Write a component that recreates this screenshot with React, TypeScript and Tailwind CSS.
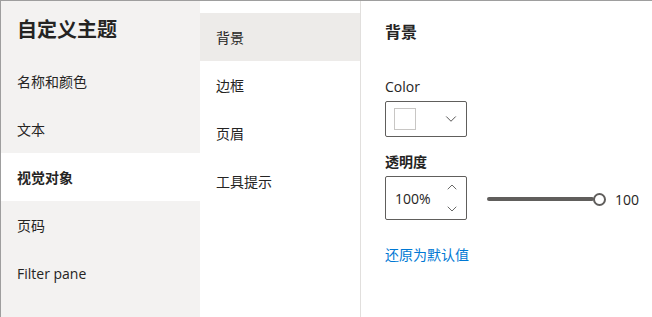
import { ChevronDown, ChevronUp } from "lucide-react";

const font = { fontFamily: '"Open Sans", "Noto Sans CJK SC", sans-serif' };

const sections = ["名称和颜色", "文本", "视觉对象", "页码", "Filter pane"];
const subSections = ["背景", "边框", "页眉", "工具提示"];

export default function App() {
  return (
    <div
      className="flex w-[652px] h-[317px] overflow-hidden border-t border-l border-[#9e9e9e] bg-white text-[#252423]"
      style={{ fontFamily: '"Noto Sans CJK SC", sans-serif' }}
    >
      {/* Left nav */}
      <div className="w-[199px] shrink-0 bg-[#f3f2f1] flex flex-col">
        <div className="h-[56px] flex items-center pl-4 text-[20px] font-bold">自定义主题</div>
        {sections.map((s, i) => (
          <div
            key={s}
            className={`h-[48px] flex items-center pl-4 text-[14px] ${i === 2 ? "bg-white font-bold" : ""}`}
            style={s === "Filter pane" ? font : undefined}
          >
            {s}
          </div>
        ))}
      </div>

      {/* Sub nav */}
      <div className="w-[161px] shrink-0 border-r border-[#e1dfdd] flex flex-col pt-3">
        {subSections.map((s, i) => (
          <div
            key={s}
            className={`h-[48px] flex items-center pl-4 text-[14px] ${i === 0 ? "bg-[#edebe9]" : ""}`}
          >
            {s}
          </div>
        ))}
      </div>

      {/* Content */}
      <div className="flex-1 pl-6 pt-[18px] flex flex-col">
        <div className="text-[16px] font-bold leading-6">背景</div>

        <div className="mt-[34px] text-[14px] leading-5" style={font}>Color</div>
        <div className="mt-[4px] w-[82px] h-[36px] border border-[#605e5c] rounded-[2px] flex items-center pl-2 pr-[6px]">
          <div className="w-[22px] h-[22px] border border-[#c8c6c4]" />
          <ChevronDown size={18} strokeWidth={1.1} className="ml-auto text-[#323130]" />
        </div>

        <div className="mt-[14px] text-[14px] font-semibold leading-5">透明度</div>
        <div className="mt-[5px] flex items-center">
          <div className="w-[82px] h-[44px] border border-[#605e5c] rounded-[2px] flex items-center pl-[9px] pr-[6px]" style={font}>
            <span className="text-[14px]">100%</span>
            <div className="ml-auto flex flex-col items-center gap-[6px] text-[#323130]">
              <ChevronUp size={16} strokeWidth={1.1} />
              <ChevronDown size={16} strokeWidth={1.1} />
            </div>
          </div>
          <div className="ml-[20px] mt-[2px] flex items-center">
            <div className="w-[107px] h-[4px] rounded-full bg-[#605e5c]" />
            <div className="w-[13px] h-[13px] rounded-full border-2 border-[#605e5c] bg-white -ml-[1px]" />
          </div>
          <span className="ml-[9px] mt-[2px] text-[14px]" style={font}>100</span>
        </div>

        <div className="mt-[24px] text-[14px] text-[#0078d4]">还原为默认值</div>
      </div>
    </div>
  );
}
